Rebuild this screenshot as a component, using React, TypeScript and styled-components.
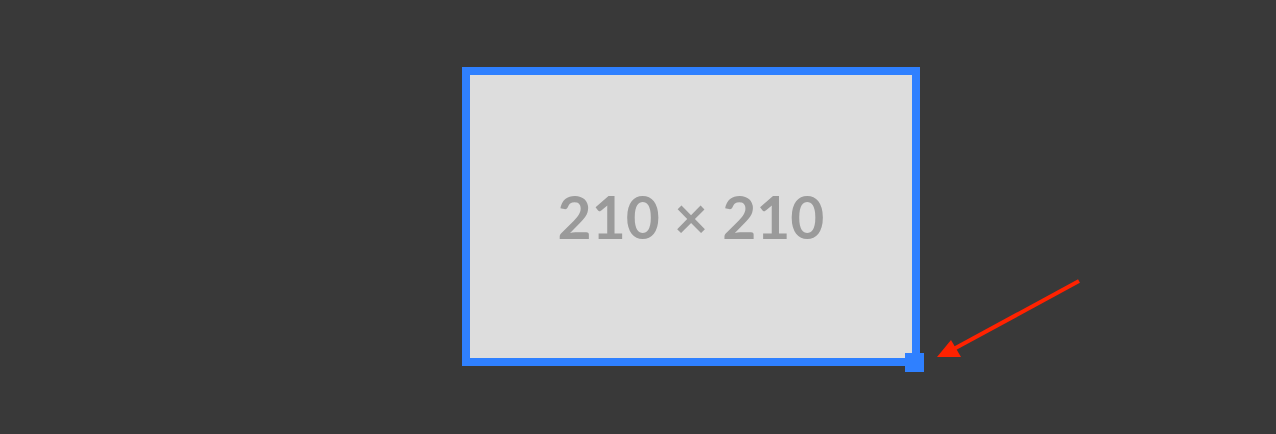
import styled, { createGlobalStyle } from "styled-components"

const GlobalStyle = createGlobalStyle`
  html, body {
    margin: 0;
    padding: 0;
    background: #393939;
  }
`

const Stage = styled.div`
  position: relative;
  width: 1276px;
  height: 434px;
  box-sizing: border-box;
  padding: 67px 0 0 462px;
  background: #393939;
  overflow: hidden;
`

const Frame = styled.div`
  position: relative;
  width: 458px;
  height: 299px;
  box-sizing: border-box;
  border: 8px solid #2f80ff;
  background: #dddddd;
  display: flex;
  align-items: center;
  justify-content: center;
`

const Label = styled.span`
  font-family: Lato, "Open Sans", sans-serif;
  font-weight: 700;
  font-size: 58.7px;
  line-height: 1;
  color: #9a9a9a;
  margin-top: 1px;
`

const Handle = styled.div`
  position: absolute;
  right: -12px;
  bottom: -14px;
  width: 19px;
  height: 19px;
  background: #2f80ff;
`

const Arrow = styled.svg`
  position: absolute;
  left: 0;
  top: 0;
  pointer-events: none;
`

export default function App() {
  return (
    <>
      <GlobalStyle />
      <Stage>
        <Frame>
          <Label>210 × 210</Label>
          <Handle />
        </Frame>
        <Arrow width={1276} height={434} viewBox="0 0 1276 434">
          <line x1={1079} y1={281} x2={950} y2={351} stroke="#ff2200" strokeWidth={4} />
          <polygon points="937,357 951,340 961,357" fill="#ff2200" />
        </Arrow>
      </Stage>
    </>
  )
}
